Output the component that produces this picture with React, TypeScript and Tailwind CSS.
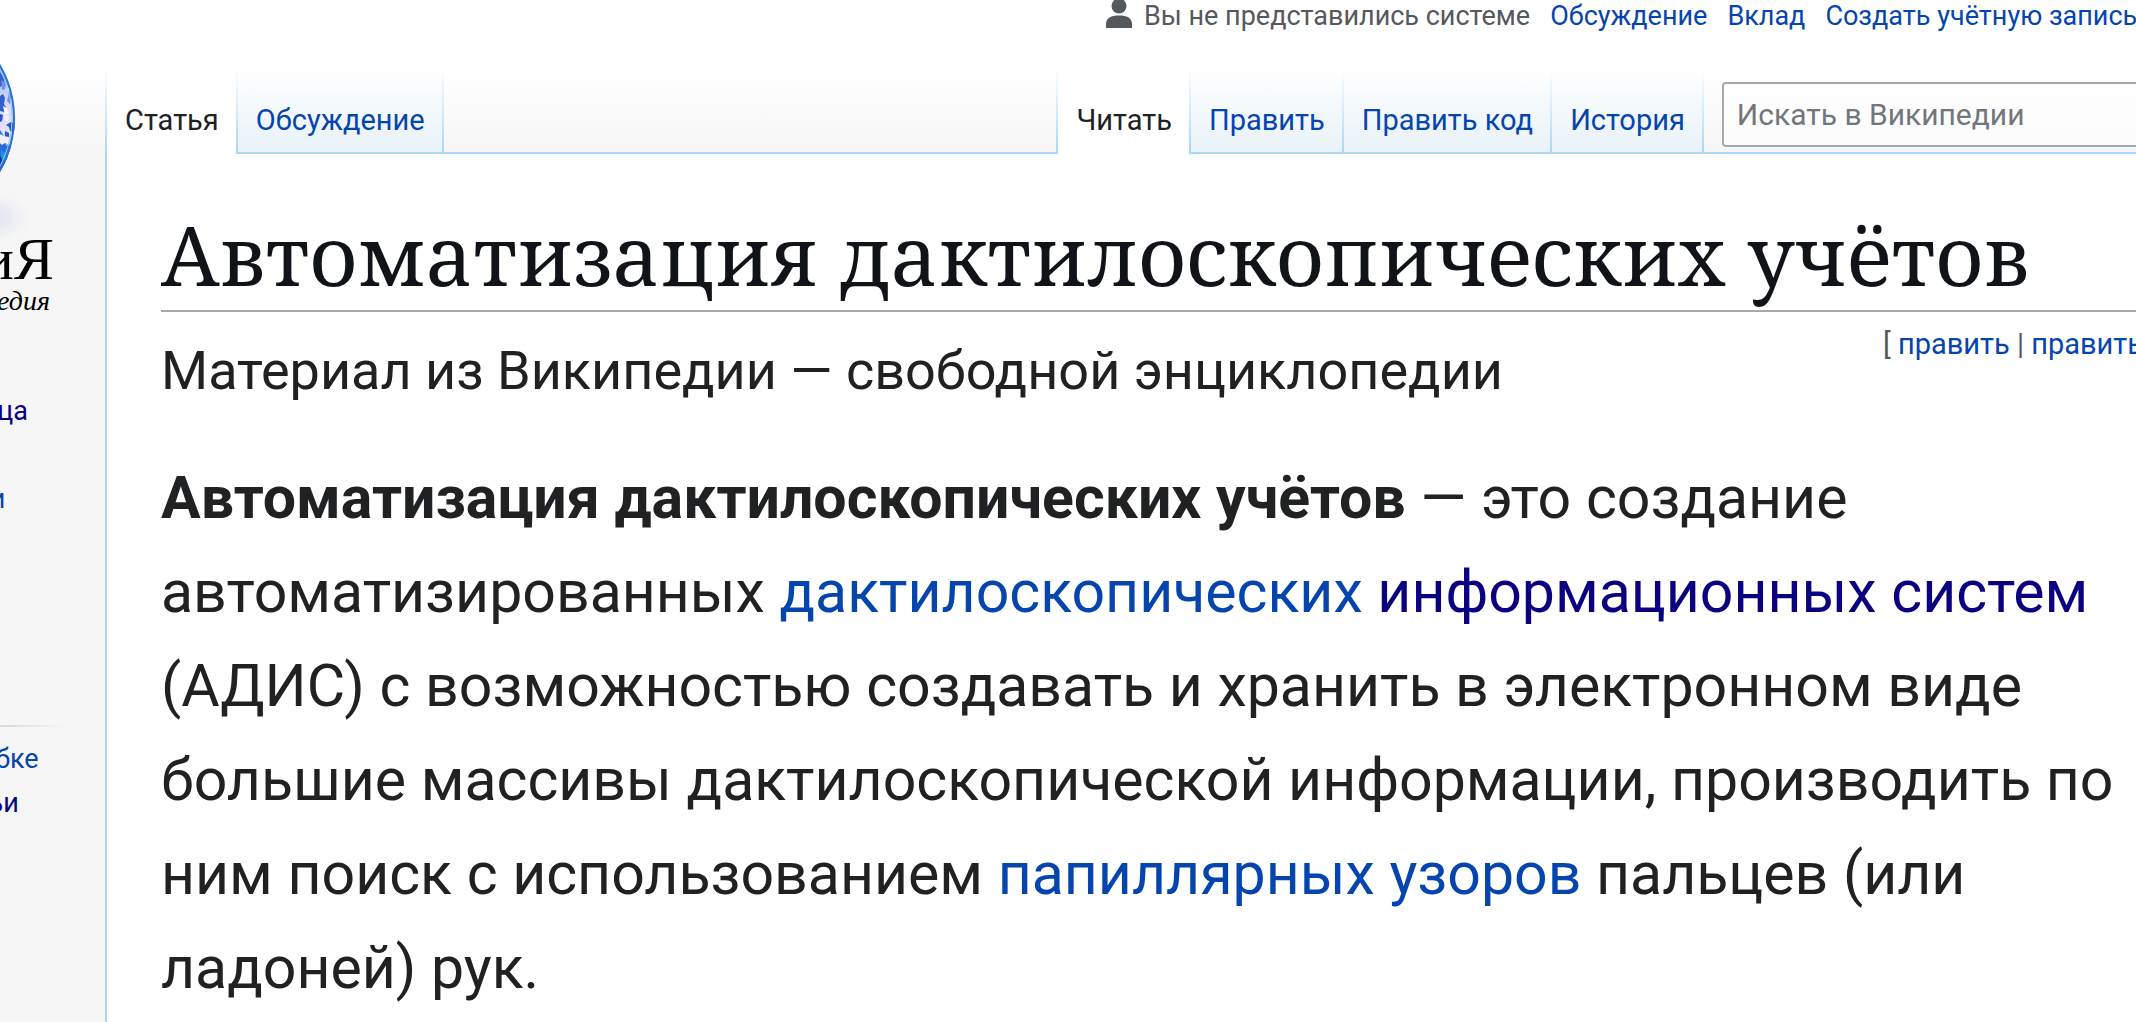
import type { ReactNode } from 'react'

const NAV_MAIN = [
  { text: 'Заглавная страница', visited: true },
  { text: 'Избранные статьи', visited: false },
]

const NAV_HELP = [
  { text: 'Сообщить об ошибке', visited: false },
  { text: 'Как править статьи', visited: true },
]

const VIEWS = ['Править', 'Править код', 'История']

function Tab({ children, active }: { children: ReactNode; active?: boolean }) {
  return (
    <li
      className={`flex shrink-0 items-end pr-[17px] pl-[18px] ${
        active ? 'bg-white pb-[17px]' : 'bg-linear-to-b from-white to-[#e8f2f8] pb-[15px]'
      }`}
    >
      <a href="#" className={`text-[29px] leading-[34px] ${active ? 'text-[#202122]' : 'text-[#0645ad]'}`}>
        {children}
      </a>
    </li>
  )
}

function Divider() {
  return <li aria-hidden="true" className="w-[2px] shrink-0 bg-linear-to-b from-white to-[#a7d7f9]" />
}

function Globe() {
  return (
    <svg className="block h-[192px] w-[60px]" viewBox="0 0 60 192" aria-hidden="true">
      <defs>
        <radialGradient id="shade">
          <stop offset="0" stopColor="#d9dff0" />
          <stop offset="0.5" stopColor="#e9ebf3" />
          <stop offset="1" stopColor="#f6f6f6" stopOpacity="0" />
        </radialGradient>
        <linearGradient id="land" x1="0" y1="0" x2="0" y2="1">
          <stop offset="0" stopColor="#9db4ee" />
          <stop offset="0.4" stopColor="#dcd9fa" />
          <stop offset="0.65" stopColor="#e6e2fb" />
          <stop offset="0.85" stopColor="#3f7ddd" />
          <stop offset="1" stopColor="#1443b4" />
        </linearGradient>
        <clipPath id="disc">
          <circle cx="-90" cy="66" r="105" />
        </clipPath>
      </defs>
      <ellipse cx="-16" cy="166" rx="54" ry="28" fill="url(#shade)" />
      <g clipPath="url(#disc)">
        <rect y="10" width="16" height="112" fill="url(#land)" />
        <path d="M0 20l4 5 1 7-5 3zM0 44l3-2 2 4-1 6 2 3-2 5-4-1z" fill="#2f5fd2" />
        <path d="M1 28l5 3-1 6-3 1zM9 40l3 5-2 7-3-3z" fill="#6e8fe8" />
        <path d="M0 62l3 1-1 6-2 1zM6 73l5-3 4 1v10l-5-2-1-4zM5 79l4 2v7l-4-1z" fill="#2456cf" />
        <path d="M3 54l4 2 2 5-4 2zM7 34l4 3 1 5-5-4z" fill="#faf8ff" />
        <path d="M0 78l5 8 1 8 5-2 2 4-8 16-5 4z" fill="#2a6bdc" />
        <path d="M0 82l4 2 5 1 3 4-2 4-5-2-3 2-2-2zM4 62l5 2-1 6-4-2z" fill="#f2eeff" />
        <path d="M1 98l4 3 4-3-6 16-2-2z" fill="#1a96e0" />
        <path d="M0 104l3 4-3 8z" fill="#0f35a0" />
      </g>
      <circle cx="-90" cy="66" r="104" fill="none" stroke="#2a6fd0" strokeWidth="2" />
      <circle cx="-90" cy="66" r="102" fill="none" stroke="#8fd0f4" strokeWidth="1" />
    </svg>
  )
}

function Sidebar() {
  return (
    <aside className="w-[105px] shrink-0 overflow-hidden bg-linear-to-b from-white from-[67px] to-[#f6f6f6] to-[153px] pt-[52px]">
      <Globe />
      <div className="-mt-[10px] flex w-[54px] flex-col items-end font-['Liberation_Serif',serif] text-black">
        <span className="text-[60px] leading-[50px]">ВикипедиЯ</span>
        <span className="pr-[4px] text-[28px] leading-[34px] whitespace-nowrap italic">свободная энциклопедия</span>
      </div>
      <NavList items={NAV_MAIN} className="mt-[71px] gap-[44px]" />
      <div className="mt-[204px] h-[2px] w-[66px] bg-linear-to-r from-[#d8d8d8] to-[#f6f6f6]" />
      <NavList items={NAV_HELP} className="mt-[10px]" />
    </aside>
  )
}

function NavList({ items, className }: { items: typeof NAV_MAIN; className: string }) {
  return (
    <ul className={`-ml-[230px] flex flex-col ${className}`}>
      {items.map((item) => (
        <li key={item.text} className="text-[27px] leading-[44px] whitespace-nowrap">
          <a href="#" className={item.visited ? 'text-[#0b0080]' : 'text-[#0645ad]'}>
            {item.text}
          </a>
        </li>
      ))}
    </ul>
  )
}

function PersonalTools() {
  return (
    <ul className="flex h-[67px] shrink-0 items-start gap-[20px] pl-[999px] text-[27px] leading-[32px] whitespace-nowrap text-[#0645ad]">
      <li className="flex text-[#54595d]">
        <svg className="mr-[12px] h-[30px] w-[26px]" viewBox="0 0 26 30" fill="#54595d" aria-hidden="true">
          <circle cx="13" cy="6" r="7.5" />
          <path d="M0 28v-4c0-6 5-8.500 13-8.500s13 2.500 13 8.500v4z" />
        </svg>
        Вы не представились системе
      </li>
      {['Обсуждение', 'Вклад', 'Создать учётную запись'].map((text) => (
        <li key={text}>
          <a href="#">{text}</a>
        </li>
      ))}
    </ul>
  )
}

export default function App() {
  return (
    <div className="flex min-h-screen overflow-hidden bg-[#f6f6f6] font-[Roboto,sans-serif] text-[#202122]">
      <Sidebar />
      <div className="w-[2px] shrink-0 bg-linear-to-b from-white from-[67px] to-[#a7d7f9] to-[153px]" />
      <div className="flex min-w-0 flex-1 flex-col overflow-hidden bg-white">
        <PersonalTools />
        <nav className="flex h-[87px] shrink-0">
          <ul className="flex">
            <Tab active>Статья</Tab>
          </ul>
          <div className="flex flex-1 border-b-2 border-[#a7d7f9] bg-linear-to-b from-white to-[#f6f6f6]">
            <ul className="flex">
              <Divider />
              <Tab>Обсуждение</Tab>
              <Divider />
            </ul>
          </div>
          <ul className="flex">
            <Divider />
            <Tab active>Читать</Tab>
          </ul>
          <div className="flex w-[947px] shrink-0 border-b-2 border-[#a7d7f9] bg-linear-to-b from-white to-[#f6f6f6]">
            <ul className="flex">
              <Divider />
              {VIEWS.map((text) => (
                <li key={text} className="flex">
                  <ul className="flex">
                    <Tab>{text}</Tab>
                    <Divider />
                  </ul>
                </li>
              ))}
            </ul>
            <input
              type="search"
              aria-label="Искать в Википедии"
              placeholder="Искать в Википедии"
              className="mt-[15px] -mr-[20px] ml-[18px] h-[65px] min-w-0 flex-1 rounded-[4px] border-2 border-[#a2a9b1] bg-white/60 px-[13px] text-[30px] placeholder:text-[#72777d]"
            />
          </div>
        </nav>
        <main className="pl-[54px]">
          <h1 className="mt-[48px] border-b-2 border-[#a2a9b1] pb-[4px] font-['Noto_Serif','DejaVu_Serif',serif] text-[83px] leading-[104px] whitespace-nowrap text-[#101418]">
            Автоматизация дактилоскопических учётов
          </h1>
          <div className="flex justify-between whitespace-nowrap">
            <p className="mt-[27px] text-[54px] leading-[64px]">Материал из Википедии — свободной энциклопедии</p>
            <p className="mt-[15px] w-[253px] text-[29px] leading-[34px] text-[#54595d]">
              [ <a href="#" className="text-[#0645ad]">править</a> | <a href="#" className="text-[#0645ad]">править код</a> ]
            </p>
          </div>
          <p className="mt-[48px] text-[59px] leading-[94px]">
            <b>Автоматизация дактилоскопических учётов</b> — это создание автоматизированных{' '}
            <a href="#" className="text-[#0645ad]">дактилоскопических</a>{' '}
            <a href="#" className="text-[#0b0080]">информационных систем</a> (АДИС) с возможностью создавать и хранить в
            электронном виде большие массивы дактилоскопической информации, производить по ним поиск с использованием{' '}
            <a href="#" className="text-[#0645ad]">папиллярных узоров</a> пальцев (или ладоней) рук.
          </p>
        </main>
      </div>
    </div>
  )
}
